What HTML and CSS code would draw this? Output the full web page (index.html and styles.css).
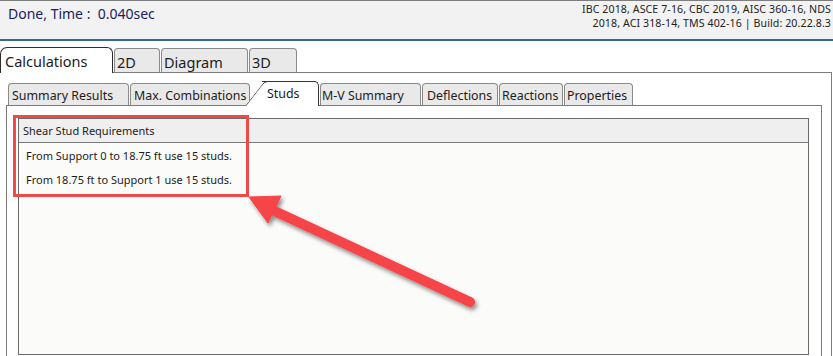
FILE: index.html
```html
<!DOCTYPE html>
<html lang="en">
<head>
    <meta charset="UTF-8">
    <meta name="viewport" content="width=device-width, initial-scale=1.0">
    <title>Beam - Calculations</title>
    <link rel="stylesheet" href="styles.css">
</head>
<body>
    <div class="statusbar">
        <div class="status">Done, Time :&nbsp; 0.040sec</div>
        <div class="codes">IBC 2018, ASCE 7-16, CBC 2019, AISC 360-16, NDS<br>2018, ACI 318-14, TMS 402-16 | Build: 20.22.8.3</div>
    </div>

    <div class="main-tabs">
        <div class="main-tab active">Calculations</div>
        <div class="main-tab tab-2d">2D</div>
        <div class="main-tab tab-diagram">Diagram</div>
        <div class="main-tab tab-3d">3D</div>
    </div>

    <div class="main-panel">
        <div class="sub-tabs">
            <div class="sub-tab tab-summary">Summary Results</div>
            <div class="sub-tab tab-combos">Max. Combinations</div>
            <div class="sub-tab active">Studs</div>
            <div class="sub-tab tab-mv">M-V Summary</div>
            <div class="sub-tab tab-defl">Deflections</div>
            <div class="sub-tab tab-react">Reactions</div>
            <div class="sub-tab tab-props">Properties</div>
        </div>

        <div class="sub-panel">
            <div class="grid">
                <div class="grid-head">Shear Stud Requirements</div>
                <div class="grid-body">
                    <div class="grid-row">From Support 0 to 18.75 ft use 15 studs.</div>
                    <div class="grid-row">From 18.75 ft to Support 1 use 15 studs.</div>
                </div>
            </div>
        </div>
    </div>

    <!-- annotation overlay -->
    <div class="callout"></div>
    <svg class="arrow" width="833" height="356" viewBox="0 0 833 356">
        <defs>
            <filter id="shadow" x="-20%" y="-20%" width="140%" height="140%">
                <feDropShadow dx="2" dy="3" stdDeviation="2" flood-color="#000" flood-opacity="0.45"/>
            </filter>
        </defs>
        <g filter="url(#shadow)" fill="#f54449" stroke="#f54449">
            <line x1="470" y1="302" x2="268" y2="208" stroke-width="10" stroke-linecap="round"/>
            <polygon points="249,197 281,196 268,223" stroke-width="1" stroke-linejoin="round"/>
        </g>
    </svg>
</body>
</html>
```

FILE: styles.css
```css
:root {
    --tab-border: #8a8a8a;
    --tab-bg: #e9e9e9;
    --panel-border: #7c7c7c;
    --grid-border: #6a6a6a;
    --callout: #f14848;
}

body {
    margin: 0;
    font-family: 'Noto Sans', 'Open Sans', sans-serif;
    color: #1c1c1c;
    background: #fff;
    width: 833px;
    height: 356px;
    overflow: hidden;
    position: relative;
}

/* status bar */
.statusbar {
    height: 38px;
    display: flex;
    justify-content: space-between;
    background: #f2f2f2;
    border-top: 1px solid #7d7d7d;
    border-bottom: 2px solid #2f6c99;
}

.status {
    padding: 3px 0 0 8px;
    font-size: 14px;
    color: #1b1b66;
}

.codes {
    padding: 1px 2px 0 0;
    font-size: 10.6px;
    line-height: 14px;
    text-align: right;
    letter-spacing: 0.1px;
    color: #222;
}

/* top level tabs */
.main-tabs {
    display: flex;
    align-items: flex-end;
    height: 26px;
    margin-top: 6px;
    margin-bottom: -1px;
    position: relative;
    z-index: 1;
}

.main-tab {
    box-sizing: border-box;
    height: 24px;
    margin-bottom: 1px;
    margin-right: 1px;
    padding: 3px 0 0 2px;
    font-size: 14.5px;
    line-height: 20px;
    background: var(--tab-bg);
    border: 1px solid var(--tab-border);
    border-bottom: none;
    border-radius: 4px 4px 0 0;
}

.main-tab.active {
    width: 113px;
    height: 26px;
    margin-bottom: 0;
    padding: 1px 0 0 4px;
    line-height: 24px;
    background: #fff;
    border-color: #2b2b2b;
    border-radius: 7px 6px 0 0;
}

.tab-2d { width: 46px; }
.tab-diagram { width: 87px; }
.tab-3d { width: 48px; }

.main-panel {
    box-sizing: border-box;
    width: 832px;
    height: 284px;
    padding: 8px 9px 0 6px;
    border-top: 1px solid var(--panel-border);
    border-right: 1px solid var(--panel-border);
}

/* second level tabs */
.sub-tabs {
    display: flex;
    align-items: flex-end;
    height: 25px;
    padding-left: 2px;
    margin-bottom: -1px;
    position: relative;
    z-index: 1;
}

.sub-tab {
    box-sizing: border-box;
    height: 22px;
    margin-bottom: 1px;
    margin-right: 1px;
    padding: 0 0 0 3px;
    font-size: 12.4px;
    line-height: 23px;
    background: var(--tab-bg);
    border: 1px solid var(--tab-border);
    border-bottom: none;
    border-radius: 4px 4px 0 0;
    position: relative;
}

.tab-summary { width: 121px; }
.tab-combos { width: 120px; margin-right: 0; }
.tab-mv { width: 101px; padding-left: 1px; }
.tab-defl { width: 76px; padding-left: 4px; }
.tab-react { width: 64px; padding-left: 2px; }
.tab-props { width: 69px; padding-left: 2px; }

.sub-tab.active {
    width: 57px;
    height: 25px;
    margin-bottom: 0;
    margin-left: 12px;
    padding: 0 0 0 5px;
    line-height: 24px;
    background: #fff;
    border-color: #333;
    border-left: none;
    border-radius: 0 5px 0 0;
    z-index: 2;
}

.sub-tab.active::before {
    content: '';
    position: absolute;
    top: -1px;
    bottom: 0;
    left: -17px;
    width: 22px;
    background: #fff;
    border-top: 1px solid #333;
    border-left: 1px solid #333;
    border-top-left-radius: 4px;
    transform: skewX(-38deg);
    transform-origin: bottom left;
    z-index: -1;
}

.sub-panel {
    box-sizing: border-box;
    height: 251px;
    padding: 12px 12px 0 11px;
    border: 1px solid var(--panel-border);
    border-bottom: none;
    background: #fff;
}

/* grid */
.grid {
    border: 1px solid var(--grid-border);
    font-size: 11px;
}

.grid-head {
    height: 23px;
    line-height: 24px;
    padding-left: 4px;
    background: #efefef;
    border-bottom: 1px solid #7a7a7a;
}

.grid-body {
    height: 210px;
    padding-top: 1px;
    background: #fbfbf9;
}

.grid-row {
    height: 24px;
    line-height: 24px;
    padding-left: 7px;
}

/* annotation */
.callout {
    position: absolute;
    left: 13px;
    top: 115px;
    width: 230px;
    height: 76px;
    border: 3px solid var(--callout);
}

.arrow {
    position: absolute;
    left: 0;
    top: 0;
    pointer-events: none;
}
```
